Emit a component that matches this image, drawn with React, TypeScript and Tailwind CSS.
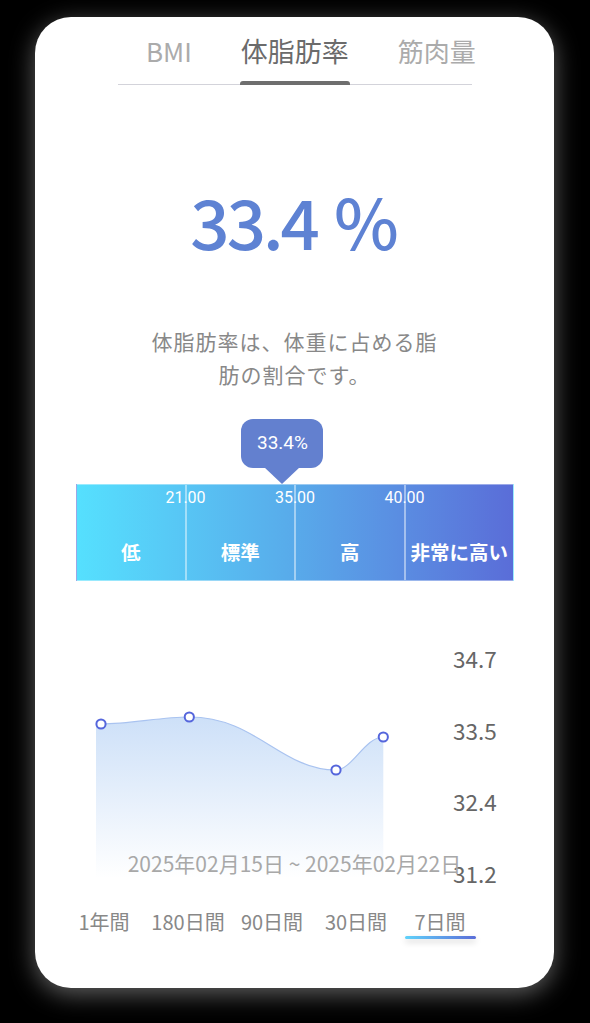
import React from 'react';

const jp = { fontFamily: '"Noto Sans CJK JP", "Noto Sans", sans-serif' };
const roboto = { fontFamily: 'Roboto, "Noto Sans CJK JP", sans-serif' };

const tabs = [
  { id: 'bmi', label: 'BMI' },
  { id: 'fat', label: '体脂肪率', active: true },
  { id: 'muscle', label: '筋肉量' },
];

const ranges = [
  { label: '低', lo: 0, hi: 21 },
  { label: '標準', lo: 21, hi: 35 },
  { label: '高', lo: 35, hi: 40 },
  { label: '非常に高い', lo: 40, hi: 50 },
];

const periods = ['1年間', '180日間', '90日間', '30日間', '7日間'];
const yLabels = ['34.7', '33.5', '32.4', '31.2'];

const value = 33.4;
const BAR_W = 438;
const SEG_W = BAR_W / ranges.length;

function markerX(v: number) {
  const i = ranges.findIndex((r) => v >= r.lo && v < r.hi);
  const r = ranges[i];
  return i * SEG_W + ((v - r.lo) / (r.hi - r.lo)) * SEG_W;
}

function Tabs() {
  return (
    <div className="ml-[83px] mt-[16px] flex w-[354px] gap-[47px] border-b border-[#d3d3da] pl-[27px]">
      {tabs.map((t) => (
        <div key={t.id} className="flex shrink-0 flex-col items-stretch">
          <span
            className={`whitespace-nowrap px-px text-center leading-[36px] ${t.active ? 'text-[27px] text-[#6b6b6b]' : 'text-[26px] text-[#ababab]'}`}
          >
            {t.label}
          </span>
          <span
            className={`-mb-px mt-[12px] h-[4px] rounded-t-[3px] ${t.active ? 'bg-[#6e6e6e]' : 'bg-transparent'}`}
          />
        </div>
      ))}
    </div>
  );
}

function RangeBar() {
  const x = markerX(value);
  return (
    <div className="ml-[41px] mt-[28px] w-[438px]">
      <div className="flex w-[82px] flex-col items-center" style={{ marginLeft: x - 41 }}>
        <div
          className="flex h-[49px] w-[82px] items-center justify-center rounded-[12px] bg-[#6380cf] text-[19px] text-white"
          style={roboto}
        >
          {value}%
        </div>
        <svg width="36" height="17" viewBox="0 0 36 17" className="-mt-px block">
          <polygon points="0,0 36,0 18,17" fill="#6380cf" />
        </svg>
      </div>
      <div className="flex h-[97px] w-[438px] border border-white/40 bg-gradient-to-r from-[#55e0fe] via-[#58aaea] to-[#5a6dd8]">
        {ranges.map((r, i) => (
          <div
            key={r.label}
            className={`relative flex flex-1 items-end justify-center pb-[14px] ${i < ranges.length - 1 ? 'border-r-2 border-white/45' : ''}`}
          >
            {i < ranges.length - 1 && (
              <span
                className="absolute right-[-1px] top-[3px] translate-x-1/2 text-[16px] leading-[20px] text-white"
                style={roboto}
              >
                {r.hi.toFixed(2)}
              </span>
            )}
            <span className="whitespace-nowrap text-[19.5px] font-bold leading-[28px] text-white">{r.label}</span>
          </div>
        ))}
      </div>
    </div>
  );
}

function Chart() {
  const line = 'M20,81 L25,81 C55,81 85,74 113.3,74 C180,74 205,127 260,127 C276,127 289,94 307.3,94';
  return (
    <div className="relative mt-[62px]">
      <div className="ml-[41px] flex h-[245px] w-[438px]">
        <svg width="377" height="245" viewBox="0 0 377 245" className="block">
          <defs>
            <linearGradient id="fill" x1="0" y1="74" x2="0" y2="235" gradientUnits="userSpaceOnUse">
              <stop offset="0" stopColor="#cde0f8" />
              <stop offset="1" stopColor="#ffffff" />
            </linearGradient>
          </defs>
          <path d={`${line} L307.3,245 L20,245 Z`} fill="url(#fill)" />
          <path d={line} fill="none" stroke="#a9c3f0" strokeWidth="1.2" />
          {[
            [25, 81],
            [113.3, 74],
            [260, 127],
            [307.3, 94],
          ].map(([cx, cy]) => (
            <circle key={cx} cx={cx} cy={cy} r="4.6" fill="#fff" stroke="#5566dc" strokeWidth="2" />
          ))}
        </svg>
        <div className="flex flex-col justify-between">
          {yLabels.map((l) => (
            <span key={l} className="text-[22.5px] leading-[30px] text-[#666]">
              {l}
            </span>
          ))}
        </div>
      </div>
      <div className="absolute inset-x-0 top-[206px] text-center text-[21px] leading-[28px] text-[#a8a8a8]">
        2025年02月15日 ~ 2025年02月22日
      </div>
    </div>
  );
}

function Periods() {
  return (
    <div className="ml-[27px] mt-[20px] flex">
      {periods.map((p, i) => {
        const active = i === periods.length - 1;
        return (
          <div key={p} className="flex w-[84px] flex-col items-center">
            <span className="whitespace-nowrap text-[20px] leading-[28px] text-[#888]">{p}</span>
            <span
              className={`h-[3px] w-[71px] rounded-full ${active ? 'bg-gradient-to-r from-[#5fd2fa] to-[#5a6dd8] shadow-[0_3px_6px_rgba(0,0,0,0.18)]' : 'bg-transparent'}`}
            />
          </div>
        );
      })}
    </div>
  );
}

export default function App() {
  return (
    <div className="h-[1023px] w-[590px] overflow-hidden bg-black pl-[35px] pt-[17px]" style={jp}>
      <div className="flex h-[971px] w-[519px] flex-col rounded-[36px] bg-white shadow-[0_6px_24px_rgba(255,255,255,0.38)]">
        <Tabs />
        <div className="mt-[90px] flex justify-center text-[69px] font-medium leading-[90px] text-[#5e82d3]">
          <span className="tracking-[-3px]">33.4</span>
          <span className="ml-[17px]">%</span>
        </div>
        <p className="mx-auto mt-[60px] w-[300px] text-center text-[21px] leading-[33px] tracking-[1px] text-[#888]">
          体脂肪率は、体重に占める脂肪の割合です。
        </p>
        <RangeBar />
        <Chart />
        <Periods />
      </div>
    </div>
  );
}
